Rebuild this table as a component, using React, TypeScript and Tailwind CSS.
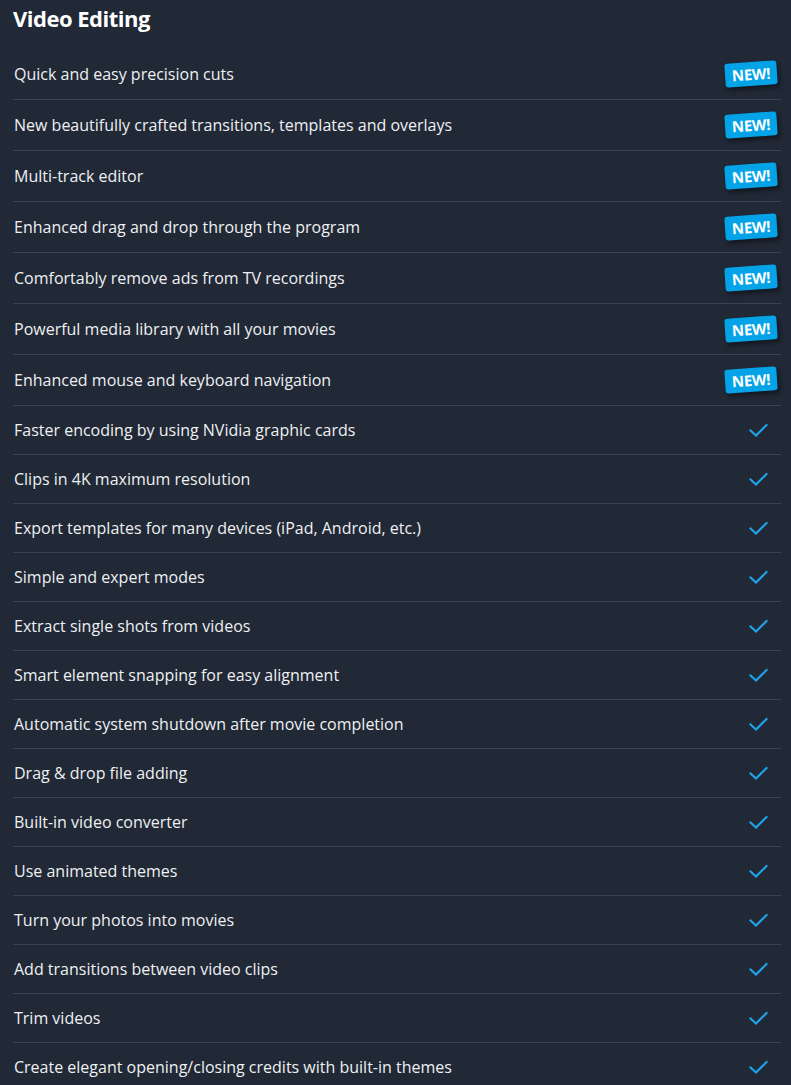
import React from "react";

const newItems = [
  "Quick and easy precision cuts",
  "New beautifully crafted transitions, templates and overlays",
  "Multi-track editor",
  "Enhanced drag and drop through the program",
  "Comfortably remove ads from TV recordings",
  "Powerful media library with all your movies",
  "Enhanced mouse and keyboard navigation",
];

const checkItems = [
  "Faster encoding by using NVidia graphic cards",
  "Clips in 4K maximum resolution",
  "Export templates for many devices (iPad, Android, etc.)",
  "Simple and expert modes",
  "Extract single shots from videos",
  "Smart element snapping for easy alignment",
  "Automatic system shutdown after movie completion",
  "Drag & drop file adding",
  "Built-in video converter",
  "Use animated themes",
  "Turn your photos into movies",
  "Add transitions between video clips",
  "Trim videos",
  "Create elegant opening/closing credits with built-in themes",
];

function Check() {
  return (
    <svg width="19" height="15" viewBox="0 0 19 15" fill="none">
      <path d="M1.5 7.5 L7 12.5 L17.5 2" stroke="#1ea4ea" strokeWidth="2.2" strokeLinecap="square" />
    </svg>
  );
}

function Badge() {
  return (
    <span className="inline-flex items-center justify-center h-[24px] w-[52px] rounded-[3px] bg-[#04a3e8] text-white text-[15px] font-bold tracking-[-0.3px] -rotate-[4deg] shadow-[2px_3px_4px_rgba(0,0,0,0.45)] leading-none">
      NEW!
    </span>
  );
}

export default function App() {
  return (
    <div className="min-h-[1085px] bg-[#212836] pl-[13px] pr-[10px] text-[#eef0f2] overflow-hidden" style={{ fontFamily: '"Open Sans", "Noto Sans", sans-serif' }}>
      <h1 className="text-[22px] font-bold leading-[36px] h-[49px] tracking-[-0.5px] text-white">Video Editing</h1>
      {newItems.map((t) => (
        <div key={t} className="h-[51px] flex items-center justify-between border-b border-[#3a4150] pl-px pr-[4px]">
          <span className="text-[16px]">{t}</span>
          <Badge />
        </div>
      ))}
      {checkItems.map((t) => (
        <div key={t} className="h-[49px] flex items-center justify-between border-b border-[#3a4150] pl-px pr-[13px]">
          <span className="text-[16px]">{t}</span>
          <Check />
        </div>
      ))}
    </div>
  );
}
